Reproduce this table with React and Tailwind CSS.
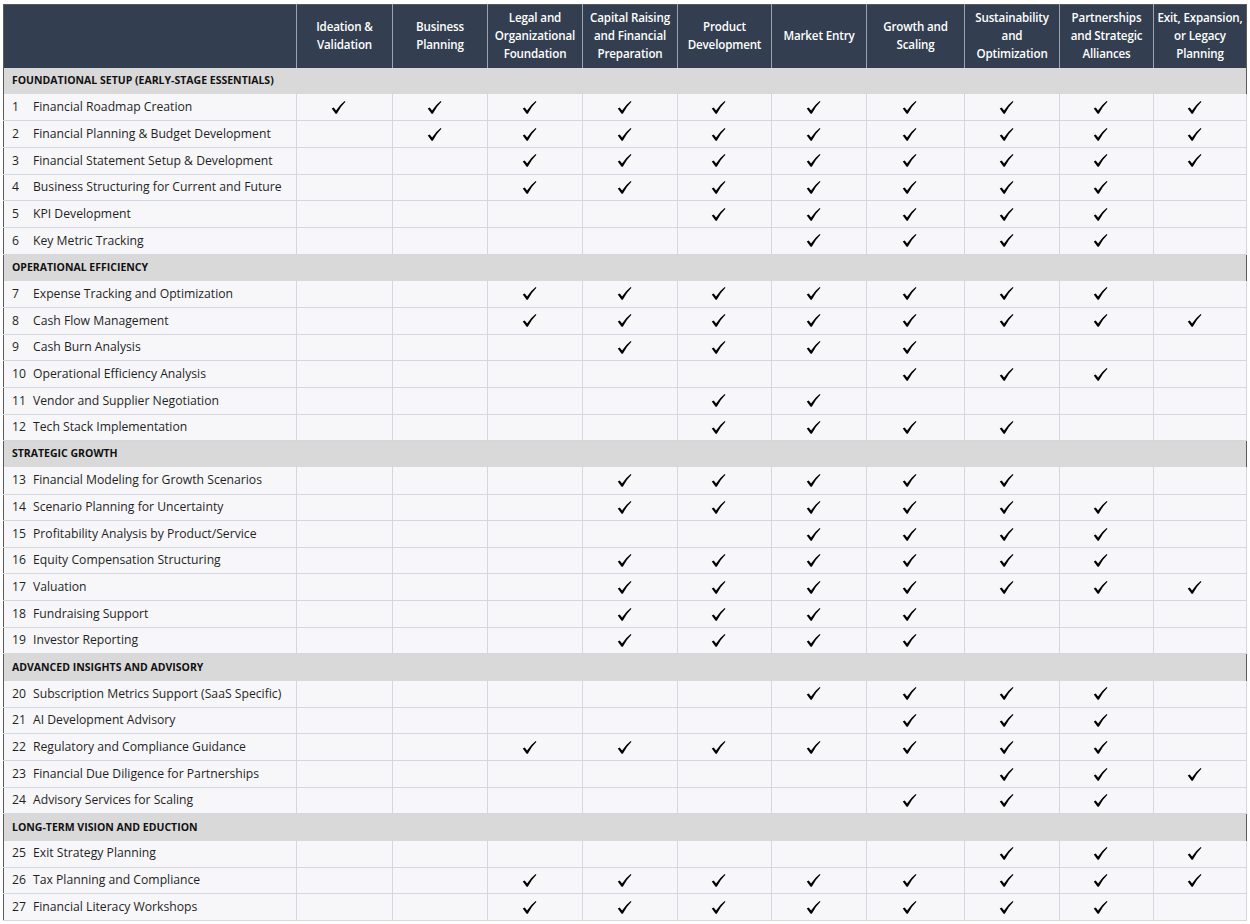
const STAGES = [
  ['Ideation &', 'Validation'],
  ['Business', 'Planning'],
  ['Legal and', 'Organizational', 'Foundation'],
  ['Capital Raising', 'and Financial', 'Preparation'],
  ['Product', 'Development'],
  ['Market Entry'],
  ['Growth and', 'Scaling'],
  ['Sustainability', 'and', 'Optimization'],
  ['Partnerships', 'and Strategic', 'Alliances'],
  ['Exit, Expansion,', 'or Legacy', 'Planning'],
]

const COL_W = [96, 95, 95, 95, 94, 95, 98, 95, 94, 93]

// columns are 1-based stage indexes
const range = (a, b) => Array.from({ length: b - a + 1 }, (_, i) => a + i)

const SECTIONS = [
  {
    title: 'FOUNDATIONAL SETUP (EARLY-STAGE ESSENTIALS)',
    rows: [
      [1, 'Financial Roadmap Creation', range(1, 10)],
      [2, 'Financial Planning & Budget Development', range(2, 10)],
      [3, 'Financial Statement Setup & Development', range(3, 10)],
      [4, 'Business Structuring for Current and Future', range(3, 9)],
      [5, 'KPI Development', range(5, 9)],
      [6, 'Key Metric Tracking', range(6, 9)],
    ],
  },
  {
    title: 'OPERATIONAL EFFICIENCY',
    rows: [
      [7, 'Expense Tracking and Optimization', range(3, 9)],
      [8, 'Cash Flow Management', range(3, 10)],
      [9, 'Cash Burn Analysis', range(4, 7)],
      [10, 'Operational Efficiency Analysis', range(7, 9)],
      [11, 'Vendor and Supplier Negotiation', [5, 6]],
      [12, 'Tech Stack Implementation', range(5, 8)],
    ],
  },
  {
    title: 'STRATEGIC GROWTH',
    rows: [
      [13, 'Financial Modeling for Growth Scenarios', range(4, 8)],
      [14, 'Scenario Planning for Uncertainty', range(4, 9)],
      [15, 'Profitability Analysis by Product/Service', range(6, 9)],
      [16, 'Equity Compensation Structuring', range(4, 9)],
      [17, 'Valuation', range(4, 10)],
      [18, 'Fundraising Support', range(4, 7)],
      [19, 'Investor Reporting', range(4, 7)],
    ],
  },
  {
    title: 'ADVANCED INSIGHTS AND ADVISORY',
    rows: [
      [20, 'Subscription Metrics Support (SaaS Specific)', range(6, 9)],
      [21, 'AI Development Advisory', range(7, 9)],
      [22, 'Regulatory and Compliance Guidance', range(3, 9)],
      [23, 'Financial Due Diligence for Partnerships', range(8, 10)],
      [24, 'Advisory Services for Scaling', range(7, 9)],
    ],
  },
  {
    title: 'LONG-TERM VISION AND EDUCTION',
    rows: [
      [25, 'Exit Strategy Planning', range(8, 10)],
      [26, 'Tax Planning and Compliance', range(3, 10)],
      [27, 'Financial Literacy Workshops', range(3, 9)],
    ],
  },
]

function Check() {
  return (
    <svg viewBox="0 0 16 15" className="inline-block w-[15px] h-[15px] align-middle -translate-x-[6px] -translate-y-[1px]">
      <path d="M0.8 8.6 L2.9 7.4 L5.4 10.6 Q9 5 14.6 0.6 L15.4 1.3 Q10 6.5 6.2 14.2 L4.9 14.2 Z" fill="#000" />
    </svg>
  )
}

export default function App() {
  return (
    <div className="min-h-screen bg-white pl-[3px] pt-[4px] font-['Open_Sans',sans-serif] text-[#1f1f1f]">
      <table className="table-fixed border-collapse border border-[#5a5a5a] w-[1243px]">
        <colgroup>
          <col className="w-[293px]" />
          {COL_W.map((w, i) => <col key={i} style={{ width: w }} />)}
        </colgroup>
        <thead>
          <tr className="h-[63px] bg-[#333f50]">
            <th className="border-r border-[#9aa3ae] p-0" />
            {STAGES.map((lines, i) => (
              <th key={i}
                className={`p-0 text-[11.6px] leading-[18px] tracking-[-0.15px] font-semibold text-white text-center align-middle whitespace-nowrap ${i < STAGES.length - 1 ? 'border-r border-[#9aa3ae]' : ''}`}>
                {lines.map(l => <div key={l}>{l}</div>)}
              </th>
            ))}
          </tr>
        </thead>
        <tbody>
          {SECTIONS.map(sec => (
            <Section key={sec.title} sec={sec} />
          ))}
        </tbody>
      </table>
    </div>
  )
}

function Section({ sec }) {
  return (
    <>
      <tr className="h-[26.66px] bg-[#d9d9d9]">
        <td colSpan={11} className="p-0 pl-[8px] text-[10.5px] font-bold text-[#111]">
          {sec.title}
        </td>
      </tr>
      {sec.rows.map(([n, label, cols]) => (
        <tr key={n} className="h-[26.66px] bg-[#f7f7f9]">
          <td className="p-0 border-b border-r border-[#d5d7e0] text-[12.2px] whitespace-nowrap">
            <div className="flex items-center">
              <span className="w-[29px] pl-[8px]">{n}</span>
              <span>{label}</span>
            </div>
          </td>
          {range(1, 10).map(c => (
            <td key={c} className="p-0 border-b border-r border-[#d5d7e0] text-center leading-none">
              {cols.includes(c) && <Check />}
            </td>
          ))}
        </tr>
      ))}
    </>
  )
}
